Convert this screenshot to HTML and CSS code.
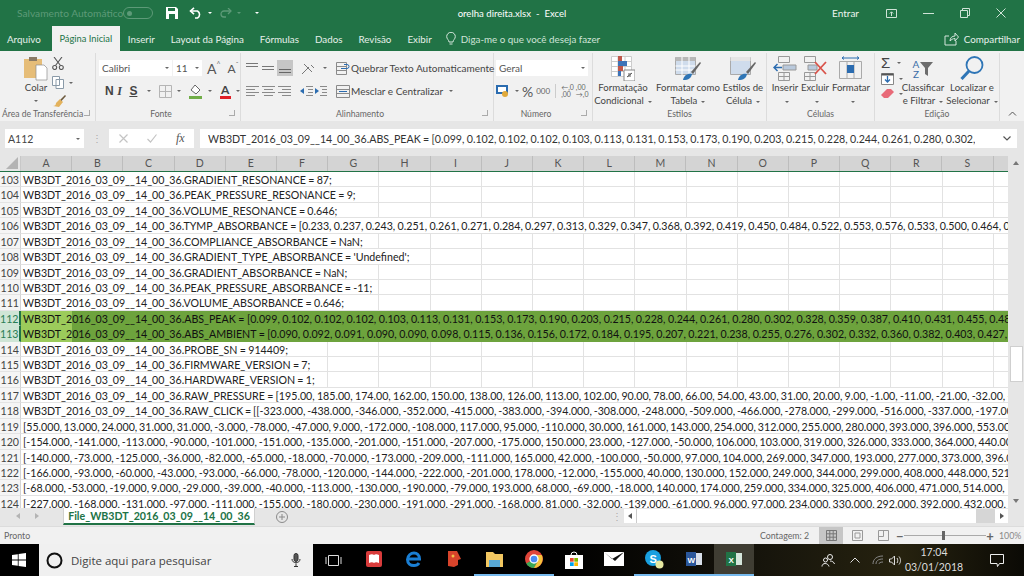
FILE: index.html
```html
<!DOCTYPE html>
<html lang="pt-BR">
<head>
<meta charset="utf-8">
<title>orelha direita.xlsx - Excel</title>
<link rel="stylesheet" href="styles.css">
</head>
<body>
<div class="app">
  <header class="titlebar">
    <div class="qat">
      <span class="autosave">Salvamento Automático</span>
      <span class="toggle"><i></i></span>
      <svg class="ic save" width="12" height="12" viewBox="0 0 12 12"><path d="M0 0h10l2 2v10H0z" fill="#fff"/><path d="M2 1h7v3H2zM3 7h6v5H3z" fill="#217346"/></svg>
      <svg class="ic undo" width="14" height="12" viewBox="0 0 14 12" fill="none" stroke="#fff" stroke-width="1.6"><path d="M1.5 4h7a4 4 0 0 1 0 7H6"/><path d="M5 .8 1.5 4 5 7.2"/></svg>
      <i class="caret light"></i>
      <svg class="ic redo" width="12" height="10" viewBox="0 0 12 10" fill="none" stroke="#5d9a78" stroke-width="1.3"><path d="M11 3H4a3 3 0 0 0 0 6h2"/><path d="M8 0l3 3-3 3"/></svg>
      <i class="caret dim"></i>
      <i class="caret light custom"></i>
    </div>
    <div class="doc-title">orelha direita.xlsx&nbsp; -&nbsp; Excel</div>
    <div class="win">
      <span class="signin">Entrar</span>
      <svg width="11" height="9" viewBox="0 0 11 9" fill="none" stroke="#cfe3d7"><path d="M.5.500h10v8H.5zM5.500 7V3M3.800 4.500l1.700-1.700 1.700 1.700"/></svg>
      <svg width="11" height="1" viewBox="0 0 11 1"><path d="M0 .5h11" stroke="#cfe3d7"/></svg>
      <svg width="10" height="10" viewBox="0 0 10 10" fill="none" stroke="#cfe3d7"><path d="M.5 2.500h7v7h-7zM2.500 2.500v-2h7v7h-2"/></svg>
      <svg width="10" height="10" viewBox="0 0 10 10" fill="none" stroke="#cfe3d7"><path d="M.5.500l9 9M9.500.500l-9 9"/></svg>
    </div>
  </header>

  <nav class="tabs">
    <span class="tab first">Arquivo</span>
    <span class="tab active">Página Inicial</span>
    <span class="tab">Inserir</span>
    <span class="tab">Layout da Página</span>
    <span class="tab">Fórmulas</span>
    <span class="tab">Dados</span>
    <span class="tab">Revisão</span>
    <span class="tab">Exibir</span>
    <span class="tell">
      <svg width="10" height="14" viewBox="0 0 10 14" fill="none" stroke="#d5e6dc"><path d="M3 10C3 8 .7 7 .7 4.600a4.300 4.300 0 0 1 8.600 0C9.300 7 7 8 7 10zM3.500 12h3"/></svg>
      Diga-me o que você deseja fazer
    </span>
    <span class="share">
      <svg width="15" height="14" viewBox="0 0 15 14" fill="none" stroke="#d5e6dc"><path d="M5 4H1v9h11V9M6 9c0-3 2-5 5-5V1l3.500 4L11 9V6.500C9 6.500 7.500 7.500 6 9z"/></svg>
      Compartilhar
    </span>
  </nav>

  <section class="ribbon">
    <div class="group g-clip">
      <div class="g-body clip-body">
        <div class="paste">
          <svg width="24" height="25" viewBox="0 0 24 25"><path d="M0 3h18v19H0z" fill="#e6bd78"/><path d="M5 1h8v4H5z" fill="#8a7a66"/><path d="M12 9h8l3 3v12H12z" fill="#fff" stroke="#8d8d8d" stroke-width=".7"/></svg>
          <span class="btn-text">Colar</span>
          <i class="caret"></i>
        </div>
        <div class="clip-tools">
          <svg width="12" height="13" viewBox="0 0 12 13" fill="none" stroke="#555" stroke-width="1.100"><path d="M2 0l6.500 8.500M10 0 3.500 8.500"/><circle cx="2.700" cy="10.500" r="2"/><circle cx="9.300" cy="10.500" r="2"/></svg>
          <span class="tool-line">
            <svg width="12" height="13" viewBox="0 0 12 13" fill="#fff" stroke="#8a9aa8"><path d="M.5.500h7v9h-7zM4 3.500h7.500v9H4z"/></svg><i class="caret"></i>
          </span>
          <svg width="14" height="12" viewBox="0 0 14 12"><path d="M8 4l3 3-4 5-6-1c2 0 3-1 3-3z" fill="#e3b25d"/><path d="M8.500 4.500 13 0l1 1-4.500 5z" fill="#6d5a3e"/></svg>
        </div>
      </div>
      <div class="g-label">Área de Transferência<i class="launcher"></i></div>
    </div>

    <div class="group g-font">
      <div class="g-body rows">
        <div class="row">
          <span class="combo c-font">Calibri<i class="caret"></i></span><span class="combo c-size">11<i class="caret"></i></span>
          <span class="grow">A<sup>^</sup></span><span class="shrink">A<sup>ˇ</sup></span>
        </div>
        <div class="row font-tools">
          <b class="fmt">N</b><b class="fmt it">I</b><b class="fmt ul">S</b><i class="caret"></i>
          <svg class="sep-l" width="13" height="13" viewBox="0 0 13 13" fill="none" stroke="#b5b5b5"><path d="M.5.500h12v12H.5zM6.500.500v12M.5 6.500h12"/></svg><i class="caret"></i>
          <svg class="sep-l" width="14" height="15" viewBox="0 0 14 15"><path d="M6 1l5 5-4 4-5-4z" fill="#fff" stroke="#666"/><path d="M0 12h13v3H0z" fill="#70ad47"/></svg><i class="caret"></i>
          <span class="font-color">A</span><i class="caret"></i>
        </div>
      </div>
      <div class="g-label launch">Fonte<i class="launcher"></i></div>
    </div>

    <div class="group g-align">
      <div class="g-body align-body">
        <div class="rows align-icons">
          <div class="row a-row">
            <svg class="lines" width="14" height="14" viewBox="0 0 14 14" stroke="#777"><path d="M1 2.500h12M1 5.500h12"/></svg>
            <svg class="lines" width="14" height="14" viewBox="0 0 14 14" stroke="#777"><path d="M1 5.500h12M1 8.500h12"/></svg>
            <span class="lines-on"><svg width="14" height="14" viewBox="0 0 14 14" stroke="#666"><path d="M1 8.500h12M1 11.500h12"/></svg></span>
            <svg class="orient" width="15" height="13" viewBox="0 0 15 13" fill="none" stroke="#777"><path d="M1 12 8 5M3 2l8 8M10 3l3 3"/></svg><i class="caret"></i>
          </div>
          <div class="row a-row a-row2">
            <svg width="15" height="12" viewBox="0 0 15 12" stroke="#8a8a8a"><path d="M1 1.500h13M1 4.500h9M1 7.500h13M1 10.500h9"/></svg>
            <svg width="15" height="12" viewBox="0 0 15 12" stroke="#8a8a8a"><path d="M1 1.500h13M3 4.500h9M1 7.500h13M3 10.500h9"/></svg>
            <svg width="15" height="12" viewBox="0 0 15 12" stroke="#8a8a8a"><path d="M1 1.500h13M5 4.500h9M1 7.500h13M5 10.500h9"/></svg>
            <svg class="ind" width="13" height="12" viewBox="0 0 13 12"><path d="M6 1.500h7M6 10.500h7M8 4.500h5M8 7.500h5" stroke="#8a8a8a"/><path d="M0 6l4-3v6z" fill="#2b6cb0"/></svg>
            <svg width="13" height="12" viewBox="0 0 13 12"><path d="M6 1.500h7M6 10.500h7M8 4.500h5M8 7.500h5" stroke="#8a8a8a"/><path d="M5 6 1 3v6z" fill="#2b6cb0"/></svg>
          </div>
        </div>
        <div class="rows wrap-cmds">
          <div class="row cmd">
            <svg width="14" height="13" viewBox="0 0 14 13" fill="none"><path d="M.5.500h10v12H.5zM.5 4.500h10M.5 8.500h10" stroke="#8a8a8a"/><path d="M5 6.500h6a2 2 0 0 0 0-4H8" stroke="#2b6cb0"/></svg>
            Quebrar Texto Automaticamente
          </div>
          <div class="row cmd">
            <svg width="14" height="13" viewBox="0 0 14 13" fill="none" stroke="#8a8a8a"><path d="M.5.500h13v12H.5zM.5 4.500h13M.5 8.500h13"/><path d="M3 6.500h8" stroke="#2b6cb0"/></svg>
            Mesclar e Centralizar<i class="caret"></i>
          </div>
        </div>
      </div>
      <div class="g-label launch">Alinhamento<i class="launcher"></i></div>
    </div>

    <div class="group g-number">
      <div class="g-body rows">
        <div class="row"><span class="combo c-num">Geral<i class="caret"></i></span></div>
        <div class="row num-tools">
          <svg width="14" height="12" viewBox="0 0 14 12"><path d="M0 0h12v9H0z" fill="#2b6cb0"/><path d="M2 2h8v5H2z" fill="#fff"/><circle cx="9" cy="9" r="3" fill="#e0a93b"/></svg><i class="caret"></i>
          <span class="pct">%</span><span class="mil">000</span><span class="vbar"></span>
          <span class="dec">←,0<br>,00</span><span class="dec">,00<br>→,0</span>
        </div>
      </div>
      <div class="g-label launch">Número<i class="launcher"></i></div>
    </div>

    <div class="group g-styles">
      <div class="g-body bigs">
        <div class="big b-cond">
          <svg width="24" height="25" viewBox="0 0 24 25"><path d="M.5.500h20v20H.5z" fill="#fff" stroke="#ccc"/><path d="M.5 5.500h20M.5 10.500h20M.5 15.500h20M7 0v21M14 0v21" stroke="#ccc"/><path d="M7 0h4v5H7z" fill="#c0574a"/><path d="M7 5h9v5H7z" fill="#3d73b8"/><path d="M7 10h5v5H7z" fill="#c0574a"/><path d="M7 15h3v5H7z" fill="#3d73b8"/><path d="M13 14h11v11H13z" fill="#fff" stroke="#888"/><path d="M16 21l5-4M17 18h3M17 20h3" stroke="#555" fill="none"/></svg>
          <span class="btn-text">Formatação<br>Condicional<i class="caret"></i></span>
        </div>
        <div class="big b-table">
          <svg width="26" height="25" viewBox="0 0 26 25"><path d="M.5 1.500h20v17H.5z" fill="#cfdcec" stroke="#aaa"/><path d="M.5 1h20v4H.5z" fill="#b8b8b8"/><path d="M7 1v18M14 1v18M.5 10h20M.5 14h20" stroke="#fff"/><path d="M16 16 25 6l1 1-8 11z" fill="#666"/><path d="M8 24c1-5 5-7 9-6-1 4-3 6-9 6z" fill="#2e75b6"/></svg>
          <span class="btn-text">Formatar como<br>Tabela<i class="caret"></i></span>
        </div>
        <div class="big b-cell">
          <svg width="26" height="25" viewBox="0 0 26 25"><path d="M.5 1.500h20v17H.5z" fill="#cfdcec" stroke="#aaa"/><path d="M.5 1h20v4H.5z" fill="#e5e5e5"/><path d="M16 16 25 6l1 1-8 11z" fill="#666"/><path d="M8 24c1-5 5-7 9-6-1 4-3 6-9 6z" fill="#2e75b6"/></svg>
          <span class="btn-text">Estilos de<br>Célula<i class="caret"></i></span>
        </div>
      </div>
      <div class="g-label">Estilos</div>
    </div>

    <div class="group g-cells">
      <div class="g-body bigs">
        <div class="big b-ins">
          <svg width="24" height="25" viewBox="0 0 24 25" fill="none" stroke="#999"><path d="M5.500.500h11v6h-11zM5.500 16.500h11v8h-11zM11 16v8M5.500 20.500h11"/><path d="M10 9h13v5H10z" fill="#b9c9dc"/><path d="M9 11.500H1M4.500 8 1 11.500 4.500 15" stroke="#2b6cb0" stroke-width="1.500"/></svg>
          <span class="btn-text">Inserir<br><i class="caret"></i></span>
        </div>
        <div class="big b-del">
          <svg width="24" height="25" viewBox="0 0 24 25" fill="none" stroke="#999"><path d="M1.500.500h11v6h-11zM1.500 16.500h11v8h-11zM7 16v8M1.500 20.500h11"/><path d="M5 9h9v5H5z" fill="#b9c9dc"/><path d="M12 6l11 12M23 6 12 18" stroke="#d9534a" stroke-width="1.800"/></svg>
          <span class="btn-text">Excluir<br><i class="caret"></i></span>
        </div>
        <div class="big b-fmt">
          <svg width="24" height="25" viewBox="0 0 24 25" fill="none" stroke="#aaa"><path d="M.5 5.500h22v17H.5zM8 5v18M15 5v18"/><path d="M8 9h7v8H8z" fill="#2b6cb0" stroke="none"/><path d="M3 2h17M5 .5 3 2l2 1.500M18 .5 20 2l-2 1.500" stroke="#2b6cb0"/></svg>
          <span class="btn-text">Formatar<br><i class="caret"></i></span>
        </div>
      </div>
      <div class="g-label">Células</div>
    </div>

    <div class="group g-edit">
      <div class="g-body bigs">
        <div class="edit-tools">
          <span class="tool-line"><span class="sigma">Σ</span><i class="caret"></i></span>
          <span class="tool-line"><svg width="13" height="12" viewBox="0 0 13 12"><path d="M.5.500h12v11H.5z" fill="#fff" stroke="#888"/><path d="M.5.500h12v2H.5z" fill="#555"/><path d="M6.500 3v6M4 6.500l2.500 2.500L9 6.500" stroke="#2b6cb0" fill="none" stroke-width="1.300"/></svg><i class="caret"></i></span>
          <span class="tool-line"><svg width="13" height="11" viewBox="0 0 13 11"><path d="M0 7l6-6h4L13 4 7 10H3z" fill="#e86a78"/></svg><i class="caret"></i></span>
        </div>
        <div class="big b-sort">
          <span class="sort-ic"><span class="az">A<br>Z</span><svg width="13" height="14" viewBox="0 0 13 14"><path d="M0 0h13L8 6v8l-3-2V6z" fill="#6d6d6d"/></svg></span>
          <span class="btn-text">Classificar<br>e Filtrar<i class="caret"></i></span>
        </div>
        <div class="big b-find">
          <svg width="24" height="25" viewBox="0 0 24 25" fill="none" stroke="#2e75b6"><circle cx="14.500" cy="9" r="8" stroke-width="1.800"/><path d="M9 15 1.500 23" stroke-width="3"/></svg>
          <span class="btn-text">Localizar e<br>Selecionar<i class="caret"></i></span>
        </div>
      </div>
      <div class="g-label">Edição</div>
    </div>
    <div class="collapse"><svg width="9" height="5" viewBox="0 0 9 5" fill="none" stroke="#555"><path d="M1 4.500 4.500 1 8 4.500"/></svg></div>
  </section>

  <section class="formula">
    <div class="namebox">A112<i class="caret"></i></div>
    <span class="f-dots">⋮</span>
    <div class="f-btns">
      <svg width="9" height="9" viewBox="0 0 9 9" stroke="#c4c4c4" stroke-width="1.200"><path d="M.5.500l8 8M8.500.500l-8 8"/></svg>
      <svg width="10" height="9" viewBox="0 0 10 9" fill="none" stroke="#c4c4c4" stroke-width="1.200"><path d="M.5 5l3 3 6-7.500"/></svg>
      <span class="fx">fx</span>
    </div>
    <div class="f-input"><span class="f-text">WB3DT_2016_03_09__14_00_36.ABS_PEAK = [0.099, 0.102, 0.102, 0.102, 0.103, 0.113, 0.131, 0.153, 0.173, 0.190, 0.203, 0.215, 0.228, 0.244, 0.261, 0.280, 0.302,</span><svg width="8" height="5" viewBox="0 0 8 5" fill="none" stroke="#555" stroke-width="1.200"><path d="M.5.500 4 4 7.500.5"/></svg></div>
  </section>

  <section class="sheet">
    <div class="sheet-main">
      <div class="cols">
        <span class="corner"><svg width="12" height="12" viewBox="0 0 12 12"><path d="M12 0v12H0z" fill="#b4b4b4"/></svg></span>
        <span>A</span><span>B</span><span>C</span><span>D</span><span>E</span><span>F</span><span>G</span><span>H</span><span>I</span><span>J</span><span>K</span><span>L</span><span>M</span><span>N</span><span>O</span><span>P</span><span>Q</span><span>R</span><span>S</span><span class="last"></span>
      </div>
      <div class="rows-area">
        <div class="r"><span class="n">103</span><span class="cells"><span class="t s7">WB3DT_2016_03_09__14_00_36.GRADIENT_RESONANCE = 87;</span></span></div>
        <div class="r"><span class="n">104</span><span class="cells"><span class="t s7">WB3DT_2016_03_09__14_00_36.PEAK_PRESSURE_RESONANCE = 9;</span></span></div>
        <div class="r"><span class="n">105</span><span class="cells"><span class="t s7">WB3DT_2016_03_09__14_00_36.VOLUME_RESONANCE = 0.646;</span></span></div>
        <div class="r"><span class="n">106</span><span class="cells"><span class="t full">WB3DT_2016_03_09__14_00_36.TYMP_ABSORBANCE = [0.233, 0.237, 0.243, 0.251, 0.261, 0.271, 0.284, 0.297, 0.313, 0.329, 0.347, 0.368, 0.392, 0.419, 0.450, 0.484, 0.522, 0.553, 0.576, 0.533, 0.500, 0.464, 0.427, 0.391</span></span></div>
        <div class="r"><span class="n">107</span><span class="cells"><span class="t s7">WB3DT_2016_03_09__14_00_36.COMPLIANCE_ABSORBANCE = NaN;</span></span></div>
        <div class="r"><span class="n">108</span><span class="cells"><span class="t s8">WB3DT_2016_03_09__14_00_36.GRADIENT_TYPE_ABSORBANCE = 'Undefined';</span></span></div>
        <div class="r"><span class="n">109</span><span class="cells"><span class="t s7">WB3DT_2016_03_09__14_00_36.GRADIENT_ABSORBANCE = NaN;</span></span></div>
        <div class="r"><span class="n">110</span><span class="cells"><span class="t s7">WB3DT_2016_03_09__14_00_36.PEAK_PRESSURE_ABSORBANCE = -11;</span></span></div>
        <div class="r"><span class="n">111</span><span class="cells"><span class="t s7">WB3DT_2016_03_09__14_00_36.VOLUME_ABSORBANCE = 0.646;</span></span></div>
        <div class="r sel sel-top"><span class="n">112</span><span class="cells"><span class="t full">WB3DT_2016_03_09__14_00_36.ABS_PEAK = [0.099, 0.102, 0.102, 0.102, 0.103, 0.113, 0.131, 0.153, 0.173, 0.190, 0.203, 0.215, 0.228, 0.244, 0.261, 0.280, 0.302, 0.328, 0.359, 0.387, 0.410, 0.431, 0.455, 0.480, 0.502</span></span></div>
        <div class="r sel sel-bot"><span class="n">113</span><span class="cells"><span class="t full">WB3DT_2016_03_09__14_00_36.ABS_AMBIENT = [0.090, 0.092, 0.091, 0.090, 0.090, 0.098, 0.115, 0.136, 0.156, 0.172, 0.184, 0.195, 0.207, 0.221, 0.238, 0.255, 0.276, 0.302, 0.332, 0.360, 0.382, 0.403, 0.427, 0.450</span></span></div>
        <div class="r"><span class="n">114</span><span class="cells"><span class="t s6">WB3DT_2016_03_09__14_00_36.PROBE_SN = 914409;</span></span></div>
        <div class="r"><span class="n">115</span><span class="cells"><span class="t s6">WB3DT_2016_03_09__14_00_36.FIRMWARE_VERSION = 7;</span></span></div>
        <div class="r"><span class="n">116</span><span class="cells"><span class="t s6">WB3DT_2016_03_09__14_00_36.HARDWARE_VERSION = 1;</span></span></div>
        <div class="r"><span class="n">117</span><span class="cells"><span class="t full">WB3DT_2016_03_09__14_00_36.RAW_PRESSURE = [195.00, 185.00, 174.00, 162.00, 150.00, 138.00, 126.00, 113.00, 102.00, 90.00, 78.00, 66.00, 54.00, 43.00, 31.00, 20.00, 9.00, -1.00, -11.00, -21.00, -32.00, -42.00</span></span></div>
        <div class="r"><span class="n">118</span><span class="cells"><span class="t full raw">WB3DT_2016_03_09__14_00_36.RAW_CLICK = [[-323.000, -438.000, -346.000, -352.000, -415.000, -383.000, -394.000, -308.000, -248.000, -509.000, -466.000, -278.000, -299.000, -516.000, -337.000, -197.000</span></span></div>
        <div class="r"><span class="n">119</span><span class="cells"><span class="t full raw">[55.000, 13.000, 24.000, 31.000, 31.000, -3.000, -78.000, -47.000, 9.000, -172.000, -108.000, 117.000, 95.000, -110.000, 30.000, 161.000, 143.000, 254.000, 312.000, 255.000, 280.000, 393.000, 396.000, 553.000</span></span></div>
        <div class="r"><span class="n">120</span><span class="cells"><span class="t full raw">[-154.000, -141.000, -113.000, -90.000, -101.000, -151.000, -135.000, -201.000, -151.000, -207.000, -175.000, 150.000, 23.000, -127.000, -50.000, 106.000, 103.000, 319.000, 326.000, 333.000, 364.000, 440.000</span></span></div>
        <div class="r"><span class="n">121</span><span class="cells"><span class="t full raw">[-140.000, -73.000, -125.000, -36.000, -82.000, -65.000, -18.000, -70.000, -173.000, -209.000, -111.000, 165.000, 42.000, -100.000, -50.000, 97.000, 104.000, 269.000, 347.000, 193.000, 277.000, 373.000, 396.000</span></span></div>
        <div class="r"><span class="n">122</span><span class="cells"><span class="t full raw">[-166.000, -93.000, -60.000, -43.000, -93.000, -66.000, -78.000, -120.000, -144.000, -222.000, -201.000, 178.000, -12.000, -155.000, 40.000, 130.000, 152.000, 249.000, 344.000, 299.000, 408.000, 448.000, 521.000</span></span></div>
        <div class="r"><span class="n">123</span><span class="cells"><span class="t full raw">[-68.000, -53.000, -19.000, 9.000, -29.000, -39.000, -40.000, -113.000, -130.000, -190.000, -79.000, 193.000, 68.000, -69.000, -18.000, 140.000, 174.000, 259.000, 334.000, 325.000, 406.000, 471.000, 514.000,</span></span></div>
        <div class="r"><span class="n">124</span><span class="cells"><span class="t full raw">[-227.000, -168.000, -131.000, -97.000, -111.000, -155.000, -180.000, -230.000, -191.000, -291.000, -168.000, 81.000, -32.000, -139.000, -61.000, 96.000, 97.000, 234.000, 330.000, 292.000, 392.000, 432.000, 503.000</span></span></div>
      </div>
    </div>
    <div class="vscroll">
      <i class="arrow up"></i>
      <span class="thumb"></span>
      <i class="arrow down"></i>
    </div>
  </section>

  <section class="sheetbar">
    <div class="nav-arrows"><i class="arrow left dim"></i><i class="arrow right dim"></i></div>
    <div class="sheet-tab">File_WB3DT_2016_03_09__14_00_36</div>
    <svg class="add" width="12" height="12" viewBox="0 0 12 12" fill="none" stroke="#8a8a8a"><circle cx="6" cy="6" r="5.500"/><path d="M6 3v6M3 6h6"/></svg>
    <span class="h-dots">⋮</span>
    <div class="hscroll">
      <span class="hbtn"><i class="arrow left"></i></span>
      <span class="hthumb"></span>
      <span class="hbtn end"><i class="arrow right"></i></span>
    </div>
  </section>

  <footer class="status">
    <span class="ready">Pronto</span>
    <span class="count">Contagem: 2</span>
    <span class="view on"><svg width="11" height="11" viewBox="0 0 11 11" fill="none" stroke="#777"><path d="M.5.500h10v10H.5zM3.800.500v10M7.200.500v10M.5 3.800h10M.5 7.200h10"/></svg></span>
    <span class="view"><svg width="11" height="11" viewBox="0 0 11 11" fill="none" stroke="#999"><path d="M.5.500h10v10H.5zM3 3h5v5H3z"/></svg></span>
    <span class="view"><svg width="11" height="11" viewBox="0 0 11 11" fill="none" stroke="#999"><path d="M.5.500h10v10H.5zM.5 6.500h5v-6"/></svg></span>
    <span class="zoom-minus">−</span>
    <span class="slider"><i></i></span>
    <span class="zoom-plus">+</span>
    <span class="zoom-val">100%</span>
  </footer>

  <footer class="taskbar">
    <svg class="start" width="14" height="14" viewBox="0 0 14 14" fill="#fff"><path d="M0 2l5.800-.8v5.400H0zM6.600 1.100 14 0v6.600H6.600zM0 7.400h5.800v5.400L0 12zM6.600 7.400H14V14l-7.400-1.100z"/></svg>
    <div class="search">
      <svg width="17" height="17" viewBox="0 0 17 17" fill="none" stroke="#111" stroke-width="2"><circle cx="8.500" cy="8.500" r="7"/></svg>
      <span class="search-text">Digite aqui para pesquisar</span>
      <svg class="mic" width="10" height="14" viewBox="0 0 10 14" fill="none" stroke="#333"><rect x="3" y=".5" width="4" height="8" rx="2" fill="#555"/><path d="M1 6c0 5 8 5 8 0M5 10.500v3M3 13.500h4"/></svg>
    </div>
    <span class="taskview"><svg width="17" height="11" viewBox="0 0 17 11" fill="none" stroke="#ddd"><path d="M3.500.5h10v10h-10zM1 2v7M16 2v7"/></svg></span>
    <div class="apps">
      <span class="app-i"><svg width="16" height="16" viewBox="0 0 16 16"><rect width="16" height="16" rx="2" fill="#d83b3b"/><path d="M3 4c2-1 4-1 5 0 1-1 3-1 5 0v8c-2-1-4-1-5 0-1-1-3-1-5 0z" fill="#fff"/></svg></span>
      <span class="app-i"><svg width="16" height="16" viewBox="0 0 16 16" fill="none" stroke="#1a7fd4" stroke-width="3"><path d="M2.500 8h11C13.500 4 11 2 8 2S1.500 4.500 1.500 8.500 4.500 14.500 8 14.500c2.500 0 4-1 5-2.500"/></svg></span>
      <span class="app-i"><svg width="15" height="18" viewBox="0 0 15 18"><path d="M1 1h9l4 8-3 1v5l-4 2-6-1z" fill="#d8442b"/><circle cx="6" cy="6" r="1.500" fill="#f3c04a"/></svg></span>
      <span class="app-i open"><svg width="17" height="15" viewBox="0 0 17 15"><path d="M0 0h7l2 2h8v13H0z" fill="#f2c761"/><path d="M3 8h11v7H3z" fill="#58a9d6"/></svg></span>
      <span class="app-i open"><svg width="18" height="18" viewBox="0 0 18 18"><circle cx="9" cy="9" r="9" fill="#e0453a"/><path d="M9 9 1.200 13.500A9 9 0 0 0 9 18l4-7z" fill="#3aa757"/><path d="M9 5h7.700A9 9 0 0 1 9 18l4-7z" fill="#f5c33b"/><circle cx="9" cy="9" r="4" fill="#4a8af4" stroke="#fff" stroke-width="1.300"/></svg></span>
      <span class="app-i"><svg width="18" height="19" viewBox="0 0 18 19"><path d="M0 5h18v14H0z" fill="#fff"/><path d="M6 5a3 3 0 0 1 6 0" fill="none" stroke="#fff"/><path d="M5 8h3.700v3.700H5z" fill="#e8492f"/><path d="M9.300 8H13v3.700H9.300z" fill="#7fb900"/><path d="M5 12.300h3.700V16H5z" fill="#00a3ee"/><path d="M9.300 12.300H13V16H9.300z" fill="#fdb900"/></svg></span>
      <span class="app-i"><svg width="20" height="14" viewBox="0 0 20 14"><path d="M0 0h20v14H0z" fill="#fff"/><path d="M0 0l8 7 12-7-9 9z" fill="#111"/></svg></span>
      <span class="app-i open"><svg width="19" height="19" viewBox="0 0 19 19"><circle cx="8" cy="8" r="8" fill="#19a0e0"/><text class="skype" x="4.500" y="12.500">S</text><circle cx="14.500" cy="14.500" r="4" fill="#e6e8a0"/></svg></span>
      <span class="app-i open"><svg width="16" height="16" viewBox="0 0 16 16"><path d="M0 1h10v14H0z" fill="#2b579a"/><path d="M10 2h6v12h-6z" fill="#d8dfe9"/><text class="app-letter" x="1.500" y="11.500">W</text></svg></span>
      <span class="app-i open current"><svg width="16" height="16" viewBox="0 0 16 16"><path d="M0 1h10v14H0z" fill="#217346"/><path d="M10 2h6v12h-6z" fill="#d5e6dc"/><text class="app-letter" x="2.500" y="11.500">X</text></svg></span>
    </div>
    <div class="tray">
      <svg width="14" height="14" viewBox="0 0 14 14" fill="none" stroke="#eee"><circle cx="9" cy="4" r="2.500"/><circle cx="4.500" cy="7" r="2"/><path d="M1 13.500c0-4 6-4 7 0M9 8c2 0 4 1 4.500 3"/></svg>
      <svg class="t-up" width="10" height="6" viewBox="0 0 10 6" fill="none" stroke="#ddd"><path d="M.5 5.500 5 1l4.500 4.500"/></svg>
      <svg width="12" height="10" viewBox="0 0 12 10" fill="none" stroke="#888"><path d="M1 9c0-5 4-8 10-8M4 9c0-3 2-5 7-5M7 9c0-1 1-2 4-2"/></svg>
      <svg width="12" height="11" viewBox="0 0 12 11" fill="none" stroke="#ddd"><path d="M.5 4h2L5.500 1v9L2.500 7h-2zM8 3c1 1.500 1 3.500 0 5M10 1.500c2 2.500 2 5.500 0 8"/></svg>
      <div class="clock">17:04<br>03/01/2018</div>
      <svg class="notif" width="14" height="13" viewBox="0 0 14 13" fill="none" stroke="#eee"><path d="M.5.500h13v9H9.500l-2 3-.5-3H.5z"/></svg>
    </div>
  </footer>
</div>
</body>
</html>
```
FILE: styles.css
```css
* { box-sizing: border-box; }
html, body { margin: 0; padding: 0; }
body { width: 1024px; height: 576px; overflow: hidden; font-family: Lato, "Open Sans", sans-serif; color: #444; font-size: 10px; }
i { display: inline-block; font-style: normal; }
svg { display: block; flex: none; }
.app { display: flex; flex-direction: column; width: 1024px; height: 576px; background: #e6e6e6; }

.caret { width: 0; height: 0; border: 2px solid transparent; border-top: 2.5px solid #666; border-bottom: 0; margin-left: 5px; vertical-align: middle; }
.caret.light { border-top-color: #fff; }
.caret.dim { border-top-color: #5d9a78; }

.titlebar { height: 26px; flex: none; background: #217346; color: #fff; display: grid; grid-template-columns: 1fr auto 1fr; align-items: center; }
.qat { display: flex; align-items: center; padding-left: 17px; }
.autosave { color: #5d9a78; width: 106px; white-space: nowrap; font-size: 10.2px; }
.toggle { width: 30px; height: 12px; border: 1px solid #5d9a78; border-radius: 6px; display: flex; align-items: center; padding-left: 3px; }
.toggle i { width: 5px; height: 5px; border-radius: 50%; background: #5d9a78; }
.save { margin-left: 13px; }
.undo { margin-left: 11px; }
.redo { margin-left: 8px; }
.custom { margin-left: 14px; }
.doc-title { color: #fff; font-size: 9.6px; }
.win { display: flex; align-items: center; justify-content: flex-end; padding-right: 18px; }
.signin { color: #eef5f0; margin-right: 27px; }
.win svg { margin-right: 26px; }
.win svg:last-child { margin-right: 0; }

.tabs { height: 25px; flex: none; background: #217346; color: #e6f0ea; display: flex; align-items: stretch; white-space: nowrap; font-size: 9.8px; }
.tab { display: flex; align-items: center; padding: 0 8px; }
.tab.first { padding: 0 7px; margin-right: 4px; }
.tab.active { background: #f1f1f1; color: #217346; width: 68px; padding: 0; justify-content: center; font-size: 9.3px; }
.tell { display: flex; align-items: center; gap: 5px; margin-left: 6px; color: #cfe3d7; }
.share { margin-left: auto; display: flex; align-items: center; gap: 5px; padding-right: 4px; }

.ribbon { height: 70px; flex: none; background: #f1f1f1; display: flex; }
.group { display: flex; flex-direction: column; border-right: 1px solid #dcdcdc; margin-top: 2px; flex: none; }
.g-body { flex: 1; min-height: 0; }
.g-label { height: 16px; padding-top: 1px; font-size: 8.6px; color: #666; display: flex; align-items: center; justify-content: center; position: relative; white-space: nowrap; }
.g-label.launch { padding-right: 14px; }
.launcher { position: absolute; right: 5px; top: 5px; width: 6px; height: 6px; border: 1px solid #aaa; border-top: 0; border-left: 0; }
.g-clip { width: 96px; }
.g-clip .g-label { justify-content: flex-start; padding-left: 2px; }
.g-font { width: 145px; }
.g-align { width: 253px; }
.g-number { width: 99px; }
.g-styles { width: 174px; }
.g-cells { width: 108px; }
.g-edit { width: 125px; }
.rows { display: flex; flex-direction: column; gap: 7px; padding-top: 7px; }
.row { display: flex; align-items: center; height: 16px; }

.clip-body { display: flex; padding-left: 24px; gap: 4px; }
.paste { width: 24px; display: flex; flex-direction: column; align-items: center; padding-top: 3px; }
.paste .caret { margin: 6px 0 0; }
.btn-text { display: block; text-align: center; line-height: 13px; white-space: nowrap; margin-top: 0; font-size: 9.6px; }
.clip-tools { display: flex; flex-direction: column; gap: 6px; padding-top: 4px; }
.tool-line { display: flex; align-items: center; }

.g-font .rows { padding-left: 3px; }
.combo { background: #fff; height: 16px; display: inline-flex; align-items: center; justify-content: space-between; padding: 0 3px; color: #555; flex: none; }
.c-font { width: 73px; }
.c-size { width: 29px; margin-left: 1px; }
.grow { font-size: 14px; margin-left: 5px; color: #555; display: inline-flex; }
.shrink { font-size: 12px; margin-left: 7px; color: #555; display: inline-flex; }
sup { font-size: 7px; line-height: 8px; color: #777; }
.font-tools { padding-left: 6px; }
.fmt { width: 16px; font-family: "Liberation Sans", sans-serif; font-size: 12px; color: #444; }
.it { font-style: italic; font-family: "Liberation Serif", serif; }
.ul { text-decoration: underline; }
.sep-l { margin-left: 8px; }
.font-color { width: 15px; margin-left: 8px; text-align: center; font-weight: 700; font-size: 12px; line-height: 12px; color: #444; border-bottom: 3px solid #e01f26; }

.align-body { display: flex; }
.align-icons { width: 91px; flex: none; padding-left: 4px; }
.a-row svg { margin-right: 2px; }
.lines-on { width: 16px; height: 16px; background: #c6c6c6; display: flex; align-items: center; justify-content: center; margin-right: 8px; }
.lines-on svg { margin: 0; }
.a-row2 svg { margin-right: 1px; }
.a-row2 .ind { margin-left: 7px; }
.wrap-cmds { padding-left: 4px; }
.cmd { gap: 1px; white-space: nowrap; }
.g-number .rows { padding-left: 2px; }
.c-num { width: 92px; }
.pct { font-size: 14px; margin-left: 3px; color: #555; }
.mil { font-size: 8px; margin-left: 3px; color: #666; }
.vbar { width: 1px; height: 14px; background: #ccc; margin: 0 5px; }
.dec { font-size: 7px; line-height: 7px; color: #666; margin-right: 2px; white-space: nowrap; }

.bigs { display: flex; }
.big { display: flex; flex-direction: column; align-items: center; padding-top: 3px; flex: none; }
.big .caret { margin-left: 4px; }
.b-cond { width: 60px; }
.b-table { width: 70px; }
.b-cell { width: 40px; }
.b-ins { width: 36px; }
.b-del { width: 24px; }
.b-fmt { width: 48px; }
.edit-tools { width: 26px; padding: 2px 0 0 6px; display: flex; flex-direction: column; gap: 3px; flex: none; }
.sigma { font-size: 15px; line-height: 15px; font-family: "Liberation Sans", sans-serif; width: 13px; }
.b-sort { width: 44px; }
.sort-ic { display: flex; align-items: center; gap: 1px; height: 25px; flex: none; }
.az { font-size: 10px; line-height: 10px; color: #3b6ea8; text-align: center; }
.b-find { width: 54px; }
.collapse { flex: 1; display: flex; align-items: flex-end; justify-content: center; padding-bottom: 5px; }

.formula { height: 35px; flex: none; background: #e6e6e6; display: flex; align-items: flex-start; padding: 8px 7px 0 5px; }
.namebox { width: 79px; height: 19px; flex: none; background: #fff; display: flex; align-items: center; justify-content: space-between; padding: 0 4px 0 3px; color: #444; font-size: 10.5px; }
.f-dots { width: 25px; flex: none; text-align: center; color: #aaa; line-height: 18px; }
.f-btns { width: 85px; height: 19px; flex: none; background: #fff; display: flex; align-items: center; gap: 19px; padding-left: 10px; }
.fx { font-family: "Liberation Serif", serif; font-style: italic; font-size: 12px; color: #555; }
.f-input { margin-left: 6px; flex: 1; min-width: 0; height: 19px; background: #fff; display: flex; align-items: center; justify-content: space-between; padding: 0 6px 0 8px; }
.f-text { font-size: 10.65px; word-spacing: -0.4px; color: #333; white-space: nowrap; overflow: hidden; }

.sheet { height: 352px; flex: none; display: flex; overflow: hidden; }
.sheet-main { width: 1008px; flex: none; display: flex; flex-direction: column; background: #fff; }
.cols { height: 16px; flex: none; display: flex; background: #d4d4d4; border-bottom: 1.5px solid #217346; color: #555; font-size: 10.5px; }
.cols span { width: 51.2px; flex: none; text-align: center; border-right: 1px solid #bdbdbd; line-height: 15px; }
.cols .corner { width: 21px; background: #e6e6e6; border-right: 1px solid #c8c8c8; display: flex; justify-content: flex-end; align-items: flex-end; padding: 0 2px 2px 0; }
.cols .last { flex: 1; border: 0; }
.rows-area { flex: 1; overflow: hidden; }
.r { height: 15.43px; display: flex; font-size: 10.65px; color: #222; white-space: nowrap; }
.n { width: 21px; flex: none; background: #f5f5f5; border-right: 1px solid #d4d4d4; border-bottom: 1px solid #e4e4e4; color: #444; text-align: right; padding-right: 1px; line-height: 16px; }
.cells { flex: 1; min-width: 0; overflow: hidden; border-bottom: 1px solid #e2e2e2; background-image: repeating-linear-gradient(90deg, transparent 0, transparent 50.2px, #e2e2e2 50.2px, #e2e2e2 51.2px); }
.t { display: block; height: 14.43px; line-height: 16px; background: #fff; padding-left: 2px; overflow: hidden; word-spacing: -0.45px; }
.t.raw { word-spacing: -0.9px; }
.s6 { width: 306.2px; }
.s7 { width: 357.4px; }
.s8 { width: 408.6px; }
.full { width: 100%; }
.r.sel .n { background: #cfe5d6; color: #2a7d55; border-right: 2px solid #217346; border-bottom-color: #cfe5d6; }
.r.sel .cells { background: #6da33d; border-bottom: 0; }
.r.sel .t { height: 15.43px; word-spacing: -0.2px; background: linear-gradient(90deg, #9ccb5b 0, #9ccb5b 51px, #6da33d 51px); color: #111; }
.sel-top .cells { box-shadow: inset 0 1px 0 #5f9c8c; }
.sel-bot .cells { box-shadow: inset 0 -1px 0 #5f9c8c; }

.vscroll { width: 16px; flex: none; background: #e6e6e6; display: flex; flex-direction: column; align-items: center; }
.arrow { width: 0; height: 0; border: 3px solid transparent; }
.arrow.up { border-top: 0; border-bottom: 4px solid #777; margin-top: 5px; }
.arrow.down { border-bottom: 0; border-top: 4px solid #777; margin-top: auto; margin-bottom: 5px; }
.arrow.left { border-left: 0; border-right: 4px solid #555; }
.arrow.right { border-right: 0; border-left: 4px solid #555; }
.arrow.dim { opacity: .35; }
.thumb { width: 13px; height: 36px; background: #fff; border: 1px solid #cfcfcf; margin-top: 181px; }

.sheetbar { height: 18px; flex: none; display: flex; align-items: flex-start; background: #e6e6e6; }
.nav-arrows { width: 63px; flex: none; display: flex; gap: 15px; padding: 5px 0 0 16px; }
.sheet-tab { width: 192px; height: 17px; flex: none; background: #fff; border-bottom: 2px solid #217346; border-left: 1px solid #d0d0d0; border-right: 1px solid #d0d0d0; color: #217346; font-weight: 700; font-size: 10.65px; text-align: center; line-height: 15px; }
.add { margin: 3px 0 0 21px; }
.h-dots { margin-left: 324px; width: 8px; flex: none; color: #aaa; line-height: 17px; }
.hscroll { margin-left: 4px; width: 384px; height: 14px; background: #d6d6d6; display: flex; margin-top: 1px; flex: none; }
.hbtn { width: 13px; height: 14px; background: #fff; border-right: 1px solid #ccc; display: flex; align-items: center; justify-content: center; flex: none; }
.hbtn.end { margin-left: auto; border: 0; }
.hthumb { width: 339px; background: #fff; flex: none; }

.status { height: 18px; flex: none; background: #f1f1f1; border-top: 1px solid #dcdcdc; display: flex; align-items: center; font-size: 8.8px; color: #666; padding-left: 4px; }
.ready { width: 756px; flex: none; }
.count { width: 59px; flex: none; white-space: nowrap; }
.view { width: 24px; height: 17px; flex: none; display: flex; align-items: center; justify-content: center; margin-right: 2px; }
.view.on { background: #c6c6c6; }
.zoom-minus { margin-left: -1px; width: 8px; font-size: 13px; font-weight: 700; flex: none; }
.slider { width: 82px; height: 1px; flex: none; background: #aaa; position: relative; }
.slider i { position: absolute; left: 38px; top: -4px; width: 3px; height: 9px; background: #666; }
.zoom-plus { width: 8px; text-align: center; font-size: 13px; font-weight: 700; flex: none; }
.zoom-val { margin-left: 5px; color: #888; }

.taskbar { height: 32px; flex: none; display: flex; align-items: center; background: linear-gradient(90deg, #000 0, #000 55%, #17150c 75%, #26220f 88%, #0b0a05 100%); color: #eee; }
.start { margin-left: 12px; }
.search { margin-left: 13px; width: 274px; height: 32px; flex: none; background: #f0f0f0; display: flex; align-items: center; padding: 0 12px 0 7px; color: #444; font-family: "Open Sans", sans-serif; font-size: 11.5px; }
.search-text { margin-left: 8px; flex: 1; }
.taskview { width: 41px; flex: none; display: flex; justify-content: center; }
.apps { display: flex; height: 32px; }
.app-i { width: 40px; height: 32px; flex: none; display: flex; align-items: center; justify-content: center; border-bottom: 2px solid transparent; }
.app-i.open { border-bottom-color: #76b9ed; }
.app-i.current { background: #3f3d33; }
.skype { fill: #fff; font: 700 11px "Liberation Sans", sans-serif; }
.app-letter { fill: #fff; font: 700 8px "Liberation Sans", sans-serif; }
.tray { margin-left: auto; display: flex; align-items: center; padding-right: 20px; }
.t-up { margin-left: 15px; }
.tray svg:nth-child(3) { margin-left: 12px; }
.tray svg:nth-child(4) { margin-left: 5px; }
.clock { width: 64px; margin-left: 1px; text-align: center; font-size: 10.5px; line-height: 15px; color: #ddd; }
.notif { margin-left: 24px; }
```
